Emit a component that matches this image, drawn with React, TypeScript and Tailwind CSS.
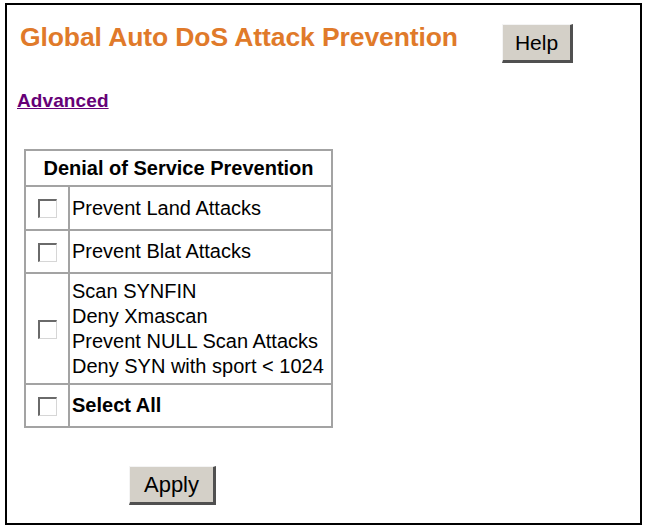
import React from 'react';

const font = { fontFamily: '"Liberation Sans", Arial, Helvetica, sans-serif' };

const Checkbox: React.FC = () => (
    <span className="inline-block w-[19px] h-[19px] bg-white border-t-2 border-l-2 border-r border-b border-t-[#6a6a6a] border-l-[#6a6a6a] border-r-[#d6d6d6] border-b-[#d6d6d6] align-middle" />
);

const rows: { lines: string[]; bold?: boolean; h: string }[] = [
    { lines: ['Prevent Land Attacks'], h: 'h-[44px]' },
    { lines: ['Prevent Blat Attacks'], h: 'h-[43px]' },
    {
        lines: ['Scan SYNFIN', 'Deny Xmascan', 'Prevent NULL Scan Attacks', 'Deny SYN with sport < 1024'],
        h: 'h-[111px]',
    },
    { lines: ['Select All'], bold: true, h: 'h-[43px]' },
];

export default function App() {
    return (
        <div className="w-[645px] h-[529px] bg-white pt-[3px] pl-[5px]" style={font}>
            <div className="w-[637px] h-[522px] border-2 border-black flex flex-col">
                {/* Header */}
                <div className="flex items-start pl-[13px] pt-[17px]">
                    <h1 className="text-[26.5px] leading-[30px] font-bold text-[#e07a2a] tracking-[-0.1px]">
                        Global Auto DoS Attack Prevention
                    </h1>
                    <button className="ml-auto mr-[67px] mt-[2px] w-[71px] h-[39px] bg-[#d4d0c8] text-[21px] text-black border-t border-l border-t-[#f4f4f4] border-l-[#f4f4f4] border-r-[3px] border-b-[3px] border-r-[#505050] border-b-[#505050]">
                        Help
                    </button>
                </div>

                <div className="pl-[10px] mt-[27px]">
                    <a href="#" className="text-[19px] leading-[20px] font-bold text-[#660077] underline tracking-[0.1px]">
                        Advanced
                    </a>
                </div>

                {/* Table */}
                <div className="pl-[17px] mt-[35px]">
                    <table className="border-collapse border-2 border-[#a3a3a3] w-[309px]">
                        <thead>
                            <tr className="h-[36px]">
                                <th colSpan={2} className="border-2 border-[#a3a3a3] text-[20px] font-bold text-black text-center">
                                    Denial of Service Prevention
                                </th>
                            </tr>
                        </thead>
                        <tbody>
                            {rows.map((r, i) => (
                                <tr key={i} className={r.h}>
                                    <td className="w-[44px] border-2 border-[#a3a3a3] text-center align-middle">
                                        <Checkbox />
                                    </td>
                                    <td
                                        className={`border-2 border-[#a3a3a3] pl-[2px] text-[20px] leading-[25px] text-black align-middle ${r.bold ? 'font-bold' : ''}`}
                                    >
                                        {r.lines.map((l) => (
                                            <div key={l}>{l}</div>
                                        ))}
                                    </td>
                                </tr>
                            ))}
                        </tbody>
                    </table>
                </div>

                <div className="pl-[122px] mt-[38px]">
                    <button className="w-[87px] h-[39px] bg-[#d4d0c8] text-[22px] text-black border-t border-l border-t-[#f4f4f4] border-l-[#f4f4f4] border-r-[3px] border-b-[3px] border-r-[#505050] border-b-[#505050]">
                        Apply
                    </button>
                </div>
            </div>
        </div>
    );
}
